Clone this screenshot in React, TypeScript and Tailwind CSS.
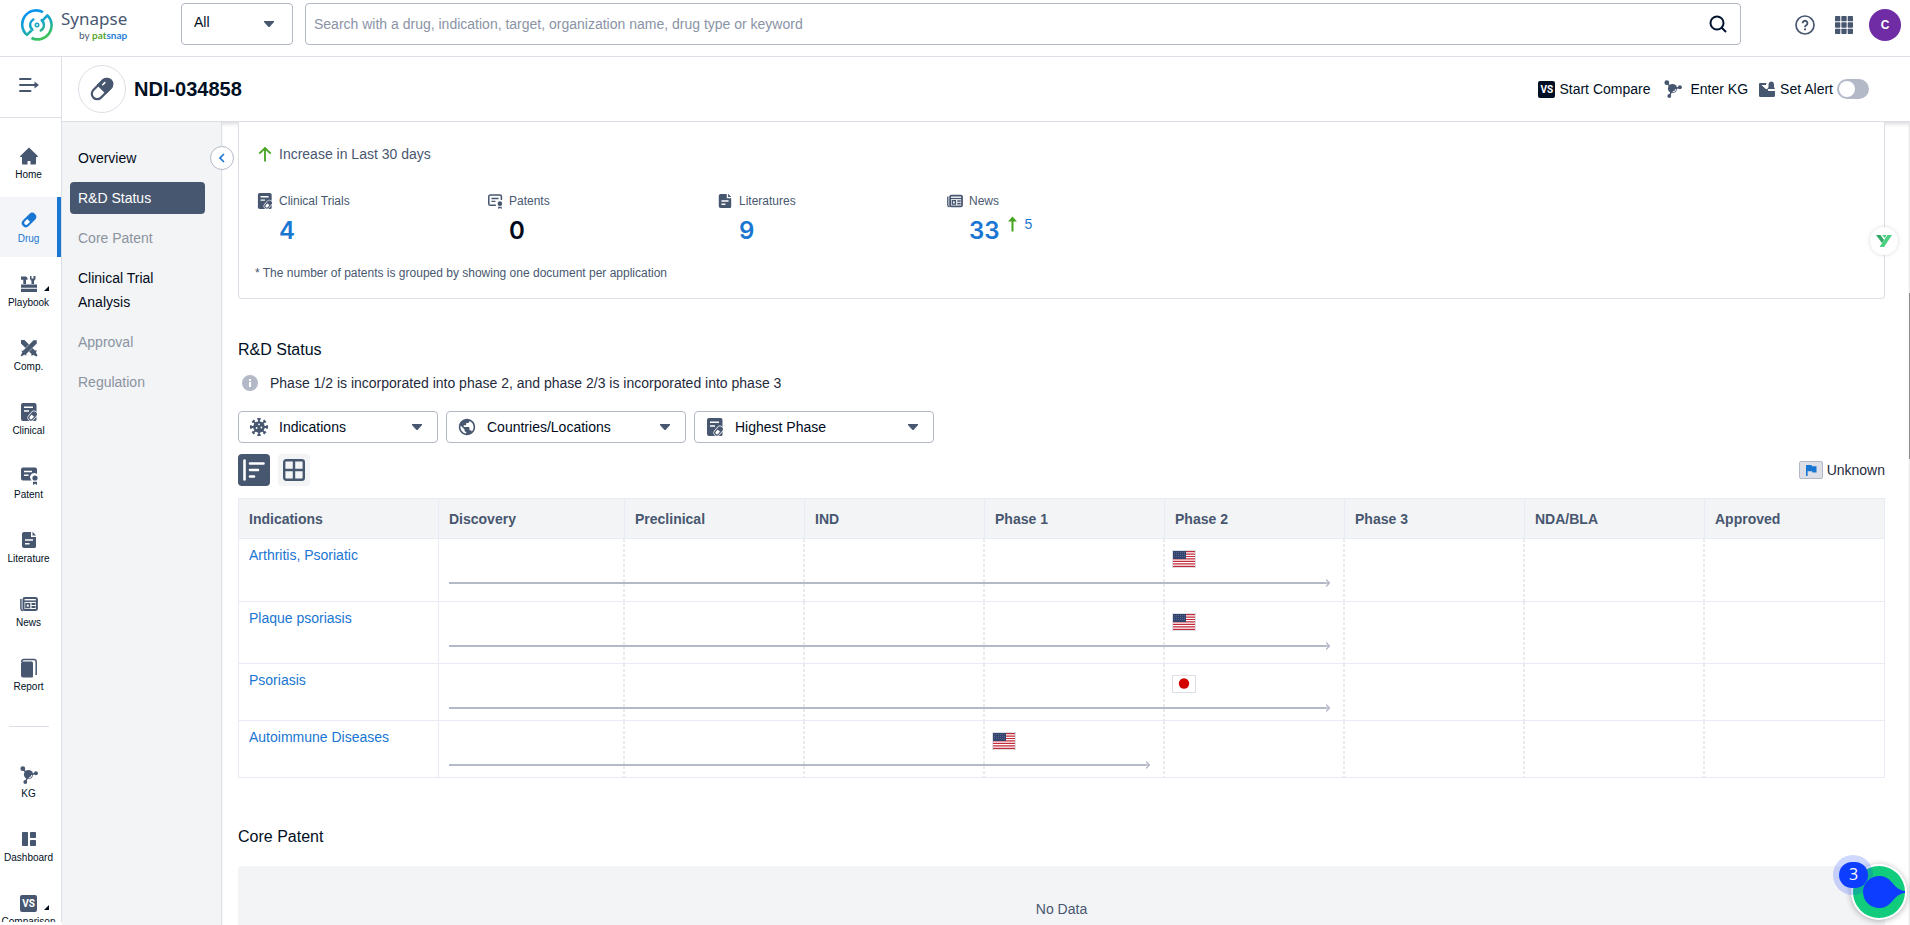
import { useState, type ReactNode } from 'react'

const STATS = [
  { label: 'Clinical Trials', value: 4, icon: <ClinicalIcon className="w-4 h-4" /> },
  { label: 'Patents', value: 0, icon: <PatentOutlineIcon className="w-4 h-4" /> },
  { label: 'Literatures', value: 9, icon: <LiteratureIcon className="w-4 h-4" /> },
  { label: 'News', value: 33, increase: 5, icon: <NewsIcon className="w-4 h-4" /> },
]

const PHASES = ['Discovery', 'Preclinical', 'IND', 'Phase 1', 'Phase 2', 'Phase 3', 'NDA/BLA', 'Approved']

const ROWS = [
  { name: 'Arthritis, Psoriatic', reached: 4, flag: 'us', height: 'h-[63px]' },
  { name: 'Plaque psoriasis', reached: 4, flag: 'us', height: 'h-[62px]' },
  { name: 'Psoriasis', reached: 4, flag: 'jp', height: 'h-[57px]' },
  { name: 'Autoimmune Diseases', reached: 3, flag: 'us', height: 'h-[57px]' },
]

export default function App() {
  return (
    <div className="h-screen overflow-hidden flex flex-col bg-white text-sm text-[#000f24] font-['Liberation_Sans',Arial,sans-serif]">
      <TopBar />
      <div className="flex flex-1 min-h-0">
        <SideBar />
        <div className="flex-1 min-w-0 flex flex-col">
          <TitleBar />
          <div className="flex flex-1 min-h-0">
            <SectionNav />
            <main className="flex-1 min-w-0 overflow-hidden pl-4 pr-6 shadow-[inset_0_4px_4px_-2px_rgba(0,0,0,0.15)]">
              <Statistics />
              <Status />
              <CorePatent />
            </main>
            {/* Scroll track */}
            <div className="w-px bg-[#e8e8e8] pt-[171px]">
              <div className="h-[166px] bg-[#8b8b8b]" />
            </div>
          </div>
        </div>
      </div>
      <FloatingWidgets />
    </div>
  )
}

/* Top bar */

function TopBar() {
  return (
    <header className="h-[57px] shrink-0 border-b border-[#dcdfe6] flex items-start pl-[21px] pr-[9px]">
      <a href="#" className="w-40 pt-2 flex items-start gap-2" aria-label="Synapse by patsnap">
        <LogoMark />
        <span className="flex flex-col items-end text-[#485770] font-['Noto_Sans','Open_Sans',sans-serif]">
          <span className="text-[17px] leading-[22px]">Synapse</span>
          <span className="text-[10px] leading-[10px] font-['Lato',sans-serif]">
            by <b className="text-[#55a532]">pat</b><b className="text-[#2b7fd8]">snap</b>
          </span>
        </span>
      </a>
      <div className="mt-[3px] w-28 h-[42px] border border-[#b3b9c7] rounded flex items-center pr-[18px]">
        <select aria-label="Search scope" className="appearance-none flex-1 min-w-0 h-full pl-3 pb-1 outline-none">
          <option>All</option>
        </select>
        <Caret />
      </div>
      <div className="mt-[3px] ml-3 flex-1 h-[42px] border border-[#b3b9c7] rounded flex items-center pl-2 pr-3">
        <input
          type="text"
          aria-label="Search"
          placeholder="Search with a drug, indication, target, organization name, drug type or keyword"
          className="flex-1 h-full outline-none placeholder:text-[#8a93a6]"
        />
        <button aria-label="Run search" className="w-5 h-5">
          <svg viewBox="0 0 20 20" className="w-5 h-5" fill="none" stroke="#00132e" strokeWidth="2">
            <circle cx="9" cy="9" r="6.5" />
            <path d="M13.5 13.5 18 18" />
          </svg>
        </button>
      </div>
      <div className="mt-[9px] ml-[54px] h-8 flex items-center gap-4">
        <button aria-label="Help" className="w-5 h-5 mr-1">
          <svg viewBox="0 0 20 20" className="w-5 h-5" fill="none" stroke="#485770" strokeWidth="1.7">
            <circle cx="10" cy="10" r="9" />
            <path d="M7.6 8.2a2.4 2.4 0 1 1 3.6 2.1c-.8.5-1.2.9-1.2 1.9" strokeWidth="1.9" />
            <path d="M10 13.4v1.9" strokeWidth="2" />
          </svg>
        </button>
        <button aria-label="Apps" className="w-[18px] h-[18px]">
          <svg viewBox="0 0 17 17" className="w-[18px] h-[18px]" fill="#485770">
            {[0, 6, 12].map((y) =>
              [0, 6, 12].map((x) => <rect key={`${x}-${y}`} x={x} y={y} width="5" height="5" rx="0.6" />)
            )}
          </svg>
        </button>
        <button className="w-8 h-8 rounded-full bg-[#702ca4] text-white text-xs font-bold">C</button>
      </div>
    </header>
  )
}

function LogoMark() {
  return (
    <svg viewBox="0 0 32 32" className="w-8 h-8 mt-px" fill="none">
      <defs>
        <linearGradient id="mark" x1="8" y1="2" x2="22" y2="30" gradientUnits="userSpaceOnUse">
          <stop offset="0" stopColor="#0a93f5" />
          <stop offset="0.55" stopColor="#1aa9c0" />
          <stop offset="1" stopColor="#3cc552" />
        </linearGradient>
      </defs>
      <g stroke="url(#mark)" strokeWidth="2.6" strokeLinejoin="round">
        <path d="M22 3.2A14 14 0 0 0 5.9 25.9L10.500 21.500" />
        <path d="M10.5 29A14 14 0 0 0 26.4 6.4L21.4 11.6" />
        <path d="M12.3 10.5a6.4 6.4 0 0 0-2.4 8.3l1.5 2" strokeLinecap="round" />
        <path d="M19.8 21.5a6.4 6.4 0 0 0 2.4-8.3l-1.5-2" strokeLinecap="round" />
        <circle cx="16" cy="16" r="1.7" strokeWidth="1.6" />
      </g>
    </svg>
  )
}

/* Left side bar */

function SideBar() {
  return (
    <nav className="w-[62px] shrink-0 border-r border-[#dcdfe6] overflow-hidden mb-[3px] flex flex-col">
      <button aria-label="Expand menu" className="h-[61px] shrink-0 border-b border-[#dcdfe6] pb-1 flex items-center pl-[19px]">
        <svg viewBox="0 0 20 16" className="w-5 h-4" fill="none" stroke="#485770" strokeWidth="2" strokeLinecap="round">
          <path d="M1 2h10.5M1 8h15M1 14h10.5" />
          <path d="M15.5 4.5 20 8l-4.500 3.500z" fill="#485770" stroke="none" />
        </svg>
      </button>
      <div className="pt-[15px] flex flex-col gap-1 shrink-0">
        <SideItem label="Home" icon={<HomeIcon />} />
        <SideItem label="Drug" icon={<DrugIcon />} active />
        <SideItem label="Playbook" icon={<PlaybookIcon />} more />
        <SideItem label="Comp." icon={<CompIcon />} />
        <SideItem label="Clinical" icon={<ClinicalIcon className="w-[18px] h-[18px]" />} />
        <SideItem label="Patent" icon={<PatentIcon />} />
        <SideItem label="Literature" icon={<LiteratureIcon className="w-[18px] h-[18px]" />} />
        <SideItem label="News" icon={<NewsIcon className="w-[18px] h-[18px]" />} />
        <SideItem label="Report" icon={<ReportIcon />} />
      </div>
      <hr className="mt-[21px] mb-[25px] ml-[9px] w-10 border-[#dcdfe6] shrink-0" />
      <div className="flex flex-col gap-1 shrink-0">
        <SideItem label="KG" icon={<KgIcon />} />
        <SideItem label="Dashboard" icon={<DashboardIcon />} />
        <SideItem label="Comparison" icon={<VsBadge color="bg-[#485770]" />} more />
      </div>
    </nav>
  )
}

function SideItem({ label, icon, active, more }: { label: string; icon: ReactNode; active?: boolean; more?: boolean }) {
  return (
    <a
      href="#"
      className={`relative h-[60px] shrink-0 pt-[14px] border-r-4 flex flex-col items-center gap-[3px] text-[10px] leading-[14px] ${
        active ? 'bg-[#f3f5f8] border-[#1976d2] text-[#1976d2]' : 'border-transparent text-[#000f24]'
      }`}
    >
      <span className={`h-[18px] flex items-center ${active ? 'text-[#1976d2]' : 'text-[#485770]'}`}>{icon}</span>
      {label}
      {more && (
        <svg viewBox="0 0 5 5" className="absolute right-2 top-[25px] w-[5px] h-[5px]" fill="#000a1a">
          <path d="M5 0v5H0z" />
        </svg>
      )}
    </a>
  )
}

/* Title bar */

function TitleBar() {
  return (
    <div className="h-[65px] shrink-0 border-b border-[#dcdfe6] flex items-center pl-4 pr-[41px]">
      <div className="w-12 h-12 rounded-full border border-[#dcdfe6] flex items-center justify-center">
        <svg viewBox="0 0 26 26" className="w-[26px] h-[26px]">
          <g transform="rotate(45 13 13)" stroke="#485770" strokeWidth="2.2">
            <rect x="7.600" y="0.800" width="10.800" height="24.400" rx="5.400" fill="#fff" />
            <path d="M7.600 12.800V6.200a5.400 5.400 0 0 1 10.800 0v6.600z" fill="#485770" />
            <path d="M10.500 9.500V6.500" stroke="#fff" strokeWidth="1.600" strokeLinecap="round" />
          </g>
        </svg>
      </div>
      <h1 className="ml-2 text-xl font-bold">NDI-034858</h1>
      <div className="ml-auto flex items-center">
        <button className="flex items-center gap-1">
          <VsBadge color="bg-[#000f24]" />
          Start Compare
        </button>
        <button className="ml-[14px] flex items-center gap-2 text-[#485770]">
          <KgIcon />
          <span className="text-[#000f24]">Enter KG</span>
        </button>
        <label htmlFor="alert" className="ml-[10px] flex items-center gap-1">
          <svg viewBox="0 0 18 18" className="w-[18px] h-[18px]" fill="#485770">
            <path d="M2 3h6.500L8 5H3.500l4.500 4.200 1.500-.7.800 2.500H17v4.500a1.500 1.500 0 0 1-1.500 1.500h-13A1.500 1.500 0 0 1 1 15.500V4a1 1 0 0 1 1-1z" />
            <path d="M13 1.500a3.200 3.200 0 0 1 3 3v2.500l1 2H9.500l1-2V4.500A3 3 0 0 1 13 1.500z" />
          </svg>
          Set Alert
        </label>
        <input
          id="alert"
          type="checkbox"
          role="switch"
          className="ml-1 appearance-none w-8 h-5 rounded-full bg-[#b3b9c7] p-[2px] before:block before:w-4 before:h-4 before:rounded-full before:bg-white checked:bg-[#1976d2] checked:before:ml-3"
        />
      </div>
    </div>
  )
}

/* Section navigation */

function SectionNav() {
  const items = [
    { label: 'Overview' },
    { label: 'R&D Status', active: true },
    { label: 'Core Patent', empty: true },
    { label: 'Clinical Trial Analysis' },
    { label: 'Approval', empty: true },
    { label: 'Regulation', empty: true },
  ]
  return (
    <nav className="relative w-40 shrink-0 bg-[#f3f4f6] border-r border-[#dcdfe6] pt-5 pl-2 pr-4 flex flex-col gap-2">
      {items.map((item) => (
        <a
          key={item.label}
          href="#"
          className={`block px-2 py-1 leading-6 rounded ${
            item.active ? 'bg-[#485770] text-white' : item.empty ? 'text-[#8a93a0]' : 'text-[#000a1a]'
          }`}
        >
          {item.label}
        </a>
      ))}
      <button
        aria-label="Collapse"
        className="absolute z-10 top-6 -right-[13px] w-6 h-6 rounded-full bg-white border border-[#b3b9c7] flex items-center justify-center"
      >
        <svg viewBox="0 0 6 10" className="w-[6px] h-[10px]" fill="none" stroke="#1976d2" strokeWidth="1.6">
          <path d="M5 1 1 5l4 4" />
        </svg>
      </button>
    </nav>
  )
}

/* Statistics card */

function Statistics() {
  return (
    <section className="relative bg-white h-[177px] border border-t-0 border-[#dcdfe6] rounded-b px-4 text-[#485770]">
      <p className="pt-[22px] pl-[3px] flex items-center gap-[7px] leading-5">
        <svg viewBox="0 0 14 16" className="w-[14px] h-4" fill="none" stroke="#45a321" strokeWidth="1.8">
          <path d="M7 15.500V2M1.300 7.600 7 2l5.700 5.600" />
        </svg>
        Increase in Last 30 days
      </p>
      <div className="flex mt-[27px]">
        {STATS.map((stat) => (
          <div key={stat.label} className="w-[230px] pl-[2px]">
            <p className="flex items-center gap-[6px] text-xs leading-5">
              {stat.icon}
              {stat.label}
            </p>
            <p className="pl-[22px] mt-1 flex items-start">
              {stat.value ? (
                <a href="#" className="font-['Inter',sans-serif] text-2xl leading-8 font-semibold text-[#1976d2]">{stat.value}</a>
              ) : (
                <span className="font-['Inter',sans-serif] text-2xl leading-8 font-semibold text-[#000a1a]">{stat.value}</span>
              )}
              {stat.increase && (
                <a href="#" className="ml-2 flex items-center gap-2 leading-[18px] text-[#1976d2]">
                  <svg viewBox="0 0 9 16" className="w-[9px] h-4" fill="#45a321">
                    <path d="M4.500 0.500 9 5.500H5.500V15.500h-2V5.500H0z" />
                  </svg>
                  {stat.increase}
                </a>
              )}
            </p>
          </div>
        ))}
      </div>
      <p className="mt-4 text-xs leading-5">* The number of patents is grouped by showing one document per application</p>
    </section>
  )
}

/* R&D status */

function Status() {
  const [view, setView] = useState('timeline')
  return (
    <section className="pt-[39px]">
      <h2 className="text-base leading-6">R&amp;D Status</h2>
      <p className="mt-2 h-[25px] pl-1 flex items-center gap-3 text-[#1f2a3d]">
        <svg viewBox="0 0 16 16" className="w-4 h-4">
          <circle cx="8" cy="8" r="8" fill="#b3b9c7" />
          <path d="M7 7h2v5H7zM7 4h2v2H7z" fill="#fff" />
        </svg>
        Phase 1/2 is incorporated into phase 2, and phase 2/3 is incorporated into phase 3
      </p>
      <div className="mt-4 flex gap-2">
        <Filter label="Indications" width="w-[200px]" icon={<VirusIcon />} />
        <Filter label="Countries/Locations" width="w-60" icon={<GlobeIcon />} />
        <Filter label="Highest Phase" width="w-60" icon={<ClinicalIcon className="w-[18px] h-[18px]" />} />
      </div>
      <div className="mt-[11px] flex items-center gap-2">
        <button
          aria-label="Timeline view"
          onClick={() => setView('timeline')}
          className={`w-8 h-8 rounded flex items-center justify-center ${view === 'timeline' ? 'bg-[#485770] text-white' : 'bg-[#f3f4f6] text-[#485770]'}`}
        >
          <svg viewBox="0 0 24 24" className="w-6 h-6" fill="none" stroke="currentColor" strokeWidth="2.600" strokeLinecap="round">
            <path d="M2.500 2.500v19" />
            <path d="M8 5.500h13.500M8 12h8M8 18.500h4" />
          </svg>
        </button>
        <button
          aria-label="Table view"
          onClick={() => setView('table')}
          className={`w-8 h-8 rounded flex items-center justify-center ${view === 'table' ? 'bg-[#485770] text-white' : 'bg-[#f3f4f6] text-[#485770]'}`}
        >
          <svg viewBox="0 0 22 22" className="w-[22px] h-[22px]" fill="none" stroke="currentColor" strokeWidth="2.400">
            <rect x="1.200" y="1.200" width="19.600" height="19.600" rx="2" />
            <path d="M11 1v20M1 11h20" />
          </svg>
        </button>
        <p className="ml-auto flex items-center gap-1 text-[#1f2a3d]">
          <span className="w-6 h-[18px] rounded-[2px] border border-[#b3b9c7] bg-[#dcdfe6] flex items-center justify-center">
            <svg viewBox="0 0 12 12" className="w-3 h-3" fill="#1976d2">
              <path d="M1 1h5.500l.5 1.200h4.500v6.300H7.500L7 7.300H2.600V12H1z" />
            </svg>
          </span>
          Unknown
        </p>
      </div>
      <PhaseTable />
    </section>
  )
}

function Filter({ label, width, icon }: { label: string; width: string; icon: ReactNode }) {
  return (
    <div className={`${width} h-8 border border-[#b3b9c7] rounded flex items-center pl-[11px] pr-[15px] text-[#485770]`}>
      {icon}
      <select aria-label={label} className="appearance-none flex-1 min-w-0 h-full pl-[11px] text-[#000a1a] outline-none">
        <option>{label}</option>
      </select>
      <Caret />
    </div>
  )
}

function PhaseTable() {
  return (
    <table className="mt-3 w-full table-fixed border-separate border-spacing-0 border-t border-l border-[#e8ebf3]">
      <thead>
        <tr className="h-10 bg-[#f3f4f6] text-left text-[#485770]">
          <th className="w-[200px] pl-[10px] border-b border-r border-[#e8ebf3]">Indications</th>
          {PHASES.map((phase, i) => (
            <th key={phase} className={`pl-[10px] border-b border-r border-[#e8ebf3] ${i === 0 ? 'w-[186px]' : ''}`}>
              {phase}
            </th>
          ))}
        </tr>
      </thead>
      <tbody>
        {ROWS.map((row) => (
          <tr key={row.name} className={`${row.height} align-top`}>
            <td className="pt-[6px] pl-[10px] leading-5 border-b border-r border-[#e8ebf3]">
              <a href="#" className="text-[#1976d2]">{row.name}</a>
            </td>
            {PHASES.map((phase, i) => (
              <td
                key={phase}
                className={`p-0 border-b border-[#e8ebf3] ${
                  i === PHASES.length - 1
                    ? 'border-r'
                    : 'bg-[repeating-linear-gradient(to_bottom,#ebebeb_0_3px,transparent_3px_5px)] bg-[length:2px_100%] bg-right bg-no-repeat'
                }`}
              >
                <div className="h-[38px] pt-[11px] pl-[7px]">
                  {i === row.reached && (row.flag === 'us' ? <UsFlag /> : <JapanFlag />)}
                </div>
                {i <= row.reached && (
                  <div className={`h-3 flex items-center ${i === 0 ? 'pl-[10px]' : ''} ${i === row.reached ? 'pr-[15px]' : ''}`}>
                    <div className="flex-1 h-[2px] bg-[#b3b9c7]" />
                    {i === row.reached && (
                      <svg viewBox="0 0 4 8" className="w-1 h-2" fill="none" stroke="#b3b9c7" strokeWidth="1.300">
                        <path d="M0 4h3.500M0 0.500 3.500 4 0 7.500" />
                      </svg>
                    )}
                  </div>
                )}
              </td>
            ))}
          </tr>
        ))}
      </tbody>
    </table>
  )
}

function UsFlag() {
  return (
    <svg viewBox="0 0 24 18" className="w-6 h-[18px]" role="img" aria-label="United States">
      <rect width="24" height="18" fill="#dcdfe6" />
      <rect x="1" y="1" width="22" height="16" fill="#fff" />
      <path d="M1 1.600h22M1 4.050h22M1 6.500h22M1 8.950h22M1 11.400h22M1 13.850h22M1 16.300h22" stroke="#c22b3b" strokeWidth="1.230" />
      <rect x="1" y="1" width="13" height="8" fill="#33446f" />
      <path d="M2 2.500h11M2 4.500h11M2 6.500h11" stroke="#6f7ca0" strokeWidth="0.600" strokeDasharray="1 1" />
    </svg>
  )
}

function JapanFlag() {
  return (
    <svg viewBox="0 0 24 18" className="w-6 h-[18px]" role="img" aria-label="Japan">
      <rect width="24" height="18" fill="#dcdfe6" />
      <rect x="1" y="1" width="22" height="16" fill="#fff" />
      <circle cx="12" cy="8.500" r="5.200" fill="#d30000" />
    </svg>
  )
}

/* Core patent */

function CorePatent() {
  return (
    <section className="pt-[47px]">
      <h2 className="text-base leading-6">Core Patent</h2>
      <div className="mt-[17px] rounded bg-[#f3f4f6] py-8 text-center leading-[22px] text-[#485770]">No Data</div>
    </section>
  )
}

/* Widgets that float over the page */

function FloatingWidgets() {
  return (
    <>
      <button
        aria-label="Extension"
        className="absolute right-3 top-[227px] w-7 h-7 rounded-full bg-white shadow-[0_0_4px_rgba(0,0,0,0.15)] flex items-center justify-center"
      >
        <svg viewBox="0 0 18 14" className="w-[18px] h-[14px]">
          <path d="M1 1h4.500l3.500 5-2 3z" fill="#2fa866" />
          <path d="M12.500 1H17L9 13H4.500l3.300-5z" fill="#4bd07f" />
          <path d="M7 1h4.500L9.800 4z" fill="#4bd07f" />
        </svg>
      </button>
      <button aria-label="Open chat" className="absolute right-[3px] bottom-[5px] w-14 h-14">
        <svg viewBox="0 0 56 56" className="w-14 h-14 rounded-full shadow-[0_1px_6px_rgba(0,0,0,0.3)]">
          <circle cx="28" cy="28" r="28" fill="#fff" />
          <circle cx="28" cy="28" r="26" fill="#11cc7c" />
          <path d="M54 27c-6-.5-9-4-13.500-9A16 16 0 1 0 40.500 38c4.500-5 7.500-8.500 13.500-9z" fill="#0d3dff" />
        </svg>
      </button>
      <span className="absolute right-[37px] bottom-[30px] w-10 h-10 rounded-full bg-[#0d3dff]/20" />
      <span className="absolute right-[42px] bottom-[37px] w-[29px] h-[26px] rounded-full bg-[#0d3dff] text-white text-base leading-[25px] text-center font-['Open_Sans',sans-serif]">
        3
      </span>
    </>
  )
}

/* Icons */

function Caret() {
  return (
    <svg viewBox="0 0 10 6" className="w-[10px] h-[6px] shrink-0 pointer-events-none" fill="#485770">
      <path d="M0 0h10v1L6 5.600a1.400 1.400 0 0 1-2 0L0 1z" />
    </svg>
  )
}

function VsBadge({ color }: { color: string }) {
  return (
    <span className={`w-[17px] h-[17px] rounded-[2px] text-white text-[10px] leading-[17px] font-bold text-center font-['Roboto',sans-serif] ${color}`}>
      VS
    </span>
  )
}

function HomeIcon() {
  return (
    <svg viewBox="0 0 18 18" className="w-[18px] h-[18px]" fill="currentColor">
      <path d="M9 .5 17.800 9v1H16v6.500a1 1 0 0 1-1 1h-4.500V14h-3v3.500H3a1 1 0 0 1-1-1V10H.2V9z" />
    </svg>
  )
}

function DrugIcon() {
  return (
    <svg viewBox="0 0 18 18" className="w-[18px] h-[18px]">
      <g transform="rotate(45 9 9)">
        <rect x="5" y="0.500" width="8" height="17" rx="4" fill="currentColor" />
        <path d="M7 9.500h4V13a2 2 0 0 1-4 0z" fill="#fff" />
      </g>
    </svg>
  )
}

function PlaybookIcon() {
  return (
    <svg viewBox="0 0 16 16" className="w-4 h-4" fill="currentColor">
      <path d="M0 .5h5L6.500 2v1.800H5V8H2.300V3.800H0zM9 0h1.500v2.500h2V0H14.500v3l-1.500 2v3h-2.500V5L9 3z" />
      <path d="M0 8.500h16v3.200H0zM0 12.700h16V16H0z" />
    </svg>
  )
}

function CompIcon() {
  return (
    <svg viewBox="0 0 18 18" className="w-[18px] h-[18px]" fill="currentColor">
      <path d="M1 1h3.500L15 11.500l1.800-.3-.8 2.300 1.500 3-1 1-3-1.500-2.300.8.3-1.800L1 4.500z" />
      <path d="M17 1h-3.500L3 11.500l-1.800-.3.800 2.300-1.500 3 1 1 3-1.500 2.300.8-.3-1.800L17 4.500z" stroke="#fff" strokeWidth="0.500" />
    </svg>
  )
}

function ClinicalIcon({ className }: { className: string }) {
  return (
    <svg viewBox="0 0 18 18" className={`${className} shrink-0`}>
      <path d="M3 0h11.500a2 2 0 0 1 2 2v14.500a1.500 1.500 0 0 1-1.500 1.500H3a2 2 0 0 1-2-2V2a2 2 0 0 1 2-2z" fill="currentColor" />
      <path d="M4 4.200h9M4 8h5" stroke="#fff" strokeWidth="1.500" />
      <g transform="rotate(40 12.500 13)">
        <rect x="9" y="7.200" width="7" height="11.600" rx="3.500" fill="#fff" />
        <rect x="10.300" y="8.500" width="4.400" height="9" rx="2.200" fill="#fff" stroke="currentColor" strokeWidth="1.300" />
        <path d="M10.300 12.500h4.400v-1.800a2.200 2.200 0 0 0-4.400 0z" fill="currentColor" />
      </g>
    </svg>
  )
}

function PatentIcon() {
  return (
    <svg viewBox="0 0 18 18" className="w-[18px] h-[18px]" fill="currentColor">
      <path d="M3 .5h12a2 2 0 0 1 2 2V7a4 4 0 0 0-5.500 6.500H3a2 2 0 0 1-2-2v-9a2 2 0 0 1 2-2z" />
      <path d="M4 4.500h8M4 8.200h4.500" stroke="#fff" strokeWidth="1.600" />
      <circle cx="15" cy="11" r="2.600" />
      <path d="M13 18v-3.200h4V18l-2-1.300z" />
    </svg>
  )
}

function PatentOutlineIcon({ className }: { className: string }) {
  return (
    <svg viewBox="0 0 18 18" className={`${className} shrink-0`} fill="currentColor">
      <path d="M16.200 8V4a1.800 1.800 0 0 0-1.800-1.800H3.800A1.800 1.800 0 0 0 2 4v8a1.800 1.800 0 0 0 1.800 1.800H10" fill="none" stroke="currentColor" strokeWidth="1.700" />
      <path d="M5 6.200h8M5 9.500h4.500" stroke="currentColor" strokeWidth="1.500" />
      <circle cx="14.500" cy="12" r="2.600" />
      <path d="M12.500 18v-2.500h4V18l-2-1z" />
    </svg>
  )
}

function LiteratureIcon({ className }: { className: string }) {
  return (
    <svg viewBox="0 0 18 18" className={`${className} shrink-0`} fill="currentColor">
      <path d="M4 1h7v5h5v9.500a1.500 1.500 0 0 1-1.500 1.500H4a2 2 0 0 1-2-2V3a2 2 0 0 1 2-2zM12.500.8l3.500 3.700h-3.500z" />
      <path d="M5 9h8M5 12.700h4.500" stroke="#fff" strokeWidth="1.600" />
    </svg>
  )
}

function NewsIcon({ className }: { className: string }) {
  return (
    <svg viewBox="0 0 18 18" className={`${className} shrink-0`} fill="none" stroke="currentColor">
      <path d="M.9 4v9.500A2 2 0 0 0 3 15.400" strokeWidth="1.500" />
      <rect x="3.500" y="2.900" width="13.400" height="12.200" rx="1.400" strokeWidth="2" />
      <path d="M3.500 6.200h13.400" strokeWidth="1.500" />
      <rect x="6" y="8.700" width="3.500" height="3.800" strokeWidth="1.600" />
      <path d="M11.500 9h4M11.500 12h4" strokeWidth="1.800" />
    </svg>
  )
}

function ReportIcon() {
  return (
    <svg viewBox="0 0 18 20" className="w-[18px] h-5" fill="currentColor">
      <path d="M2.500 3.500h9A1.500 1.500 0 0 1 13 5v13.500a1 1 0 0 1-1 1H3a2 2 0 0 1-2-2V5z" />
      <path d="M1.800 4A2.200 2.200 0 0 1 3.500 1.500H14A2.200 2.200 0 0 1 16.200 3.700V17" fill="none" stroke="currentColor" strokeWidth="1.500" />
    </svg>
  )
}

function KgIcon() {
  return (
    <svg viewBox="0 0 18 18" className="w-[18px] h-[18px]" fill="currentColor" stroke="currentColor">
      <path d="M2.500 2.500 8.500 9l7-1.500M8.500 9l-3 7" strokeWidth="1.500" fill="none" />
      <circle cx="8.500" cy="8.500" r="4.600" stroke="none" />
      <path d="M11.900 9a3.500 3.500 0 0 1-3.200 3" fill="none" stroke="#fff" strokeWidth="1" />
      <circle cx="2.800" cy="2.700" r="2.400" stroke="none" />
      <circle cx="15.900" cy="7.300" r="2" stroke="none" />
      <circle cx="5.300" cy="16" r="1.900" stroke="none" />
    </svg>
  )
}

function DashboardIcon() {
  return (
    <svg viewBox="0 0 14 14" className="w-[14px] h-[14px]" fill="currentColor">
      <rect width="6" height="14" rx="0.800" />
      <rect x="8" width="6" height="6" rx="0.800" />
      <rect x="8" y="8" width="6" height="6" rx="0.800" />
    </svg>
  )
}

function VirusIcon() {
  return (
    <svg viewBox="0 0 18 18" className="w-[18px] h-[18px] shrink-0">
      <g stroke="currentColor" strokeWidth="1.800">
        <path d="M9 1v16M1 9h16M3.300 3.300l11.400 11.400M14.700 3.300 3.300 14.700" />
        <path d="M7.300.9h3.400M7.300 17.100h3.400M.9 7.300v3.400M17.100 7.300v3.400M2.200 4.400l2.200-2.200M13.600 2.200l2.200 2.200M2.200 13.600l2.200 2.200M13.600 15.800l2.200-2.200" />
      </g>
      <circle cx="9" cy="9" r="5.800" fill="currentColor" />
      <circle cx="9" cy="6.300" r="0.900" fill="#fff" />
      <circle cx="6.600" cy="10" r="0.900" fill="#fff" />
      <circle cx="11.400" cy="9.500" r="0.900" fill="#fff" />
    </svg>
  )
}

function GlobeIcon() {
  return (
    <svg viewBox="1 1 22 22" className="w-[18px] h-[18px] shrink-0" fill="currentColor">
      <path d="M12 2C6.480 2 2 6.480 2 12s4.480 10 10 10 10-4.480 10-10S17.520 2 12 2zm-1 17.930c-3.950-.49-7-3.850-7-7.930 0-.62.080-1.210.210-1.790L9 15v1c0 1.100.9 2 2 2v1.930zm6.900-2.540c-.26-.81-1-1.390-1.900-1.390h-1v-3c0-.55-.45-1-1-1H8v-2h2c.55 0 1-.45 1-1V7h2c1.100 0 2-.9 2-2v-.41c2.930 1.190 5 4.060 5 7.410 0 2.080-.8 3.970-2.100 5.390z" />
    </svg>
  )
}
